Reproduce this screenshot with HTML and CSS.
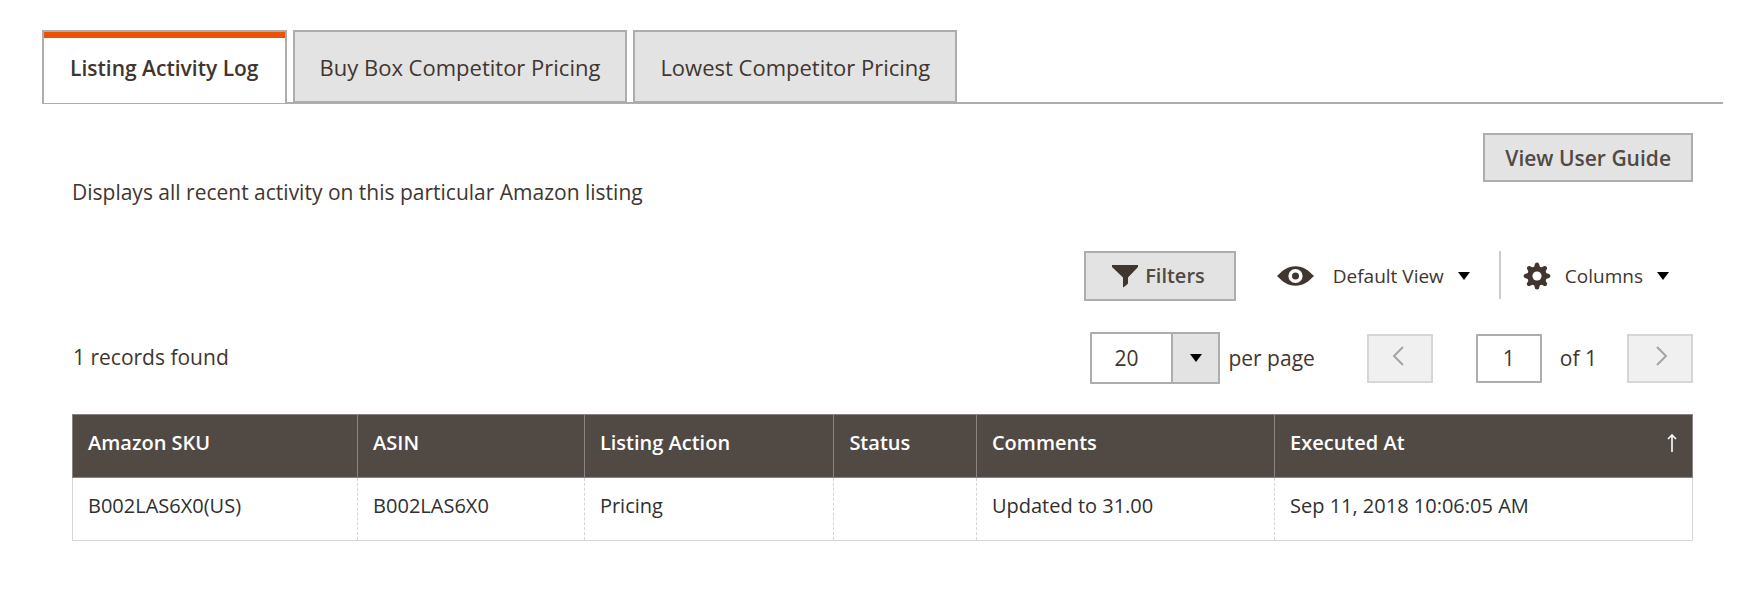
FILE: index.html
```html
<!DOCTYPE html>
<html lang="en">
<head>
<meta charset="utf-8">
<title>Listing Activity Log</title>
<link rel="stylesheet" href="styles.css">
</head>
<body>
<main class="page">
  <div class="tabs" role="tablist" aria-label="Listing details">
    <button class="tab tab-active" type="button" role="tab" aria-selected="true" aria-controls="activity">Listing Activity Log</button>
    <button class="tab" type="button" role="tab" aria-selected="false">Buy Box Competitor Pricing</button>
    <button class="tab" type="button" role="tab" aria-selected="false">Lowest Competitor Pricing</button>
  </div>

  <section class="panel" id="activity" role="tabpanel">
    <div class="intro">
      <p class="description">Displays all recent activity on this particular Amazon listing</p>
      <button class="button guide" type="button">View User Guide</button>
    </div>

    <div class="toolbar">
      <button class="button filters" type="button">
        <svg width="26" height="23" viewBox="0 0 26 23" aria-hidden="true"><path d="M0 0H26V2L16 12.5V18.5L14 20.5L11 22.5V12.5L0 2Z" fill="#41362f"/></svg>
        Filters
      </button>
      <button class="menu view" type="button">
        <svg class="eye" width="37" height="20" viewBox="0 0 38 20" aria-hidden="true"><path fill-rule="evenodd" fill="#41362f" d="M0 10C6 4 11 0 19 0S32 4 38 10C32 16 27 20 19 20S6 16 0 10ZM19 2.7A7.3 7.3 0 1 0 19 17.3 7.3 7.3 0 1 0 19 2.7Z"/><circle cx="19" cy="10" r="3.6" fill="#41362f"/></svg>
        <span>Default View</span>
        <svg width="12" height="8" viewBox="0 0 12 8" aria-hidden="true"><path d="M0 0H12L6 8Z"/></svg>
      </button>
      <button class="menu columns" type="button">
        <svg width="28" height="28" viewBox="-14 -14 28 28" aria-hidden="true">
          <g fill="#41362f">
            <path id="teeth" d="M-3.2 -8L-2 -12.2Q0 -14.6 2 -12.2L3.2 -8V8L2 12.2Q0 14.6 -2 12.2L-3.2 8Z"/>
            <use href="#teeth" transform="rotate(45)"/>
            <use href="#teeth" transform="rotate(90)"/>
            <use href="#teeth" transform="rotate(135)"/>
            <circle r="9.8"/>
          </g>
          <circle r="4.6" fill="#fff"/>
        </svg>
        <span>Columns</span>
        <svg width="12" height="8" viewBox="0 0 12 8" aria-hidden="true"><path d="M0 0H12L6 8Z"/></svg>
      </button>
    </div>

    <div class="pager">
      <p class="records">1 records found</p>
      <span class="select-box">
        <select class="size" id="size"><option>20</option><option>30</option><option>50</option><option>100</option></select>
        <span class="select-arrow"><svg width="12" height="8" viewBox="0 0 12 8" aria-hidden="true"><path d="M0 0H12L6 8Z"/></svg></span>
      </span>
      <label class="size-label" for="size">per page</label>
      <button class="step previous" type="button" aria-label="Previous page" disabled>
        <svg width="12" height="20" viewBox="0 0 12 20" aria-hidden="true"><path d="M11 1L2 10L11 19"/></svg>
      </button>
      <input class="current" id="current" type="text" value="1">
      <label class="total" for="current">of 1</label>
      <button class="step next" type="button" aria-label="Next page" disabled>
        <svg width="12" height="20" viewBox="0 0 12 20" aria-hidden="true"><path d="M1 1L10 10L1 19"/></svg>
      </button>
    </div>

    <table class="grid">
      <colgroup><col class="c-sku"><col class="c-asin"><col class="c-action"><col class="c-status"><col class="c-comments"><col class="c-date"></colgroup>
      <thead>
        <tr>
          <th scope="col">Amazon SKU</th>
          <th scope="col">ASIN</th>
          <th scope="col">Listing Action</th>
          <th scope="col">Status</th>
          <th scope="col">Comments</th>
          <th scope="col" aria-sort="ascending"><div class="sorted">Executed At
            <svg width="10" height="18" viewBox="0 0 10 18" aria-hidden="true"><path d="M5 18V2M1 5L5 1L9 5" fill="none" stroke="#fff" stroke-width="1.6"/></svg></div></th>
        </tr>
      </thead>
      <tbody>
        <tr>
          <td>B002LAS6X0(US)</td>
          <td>B002LAS6X0</td>
          <td>Pricing</td>
          <td></td>
          <td>Updated to 31.00</td>
          <td>Sep 11, 2018 10:06:05 AM</td>
        </tr>
      </tbody>
    </table>
  </section>
</main>
</body>
</html>
```
FILE: styles.css
```css
* { box-sizing: border-box; }

body {
  margin: 0;
  background: #fff;
  color: #41362f;
  font: 400 21px/30px "Open Sans", "Noto Sans", sans-serif;
}

p { margin: 0; }
svg { display: block; flex: none; }

button, input, select {
  margin: 0;
  font: inherit;
  color: inherit;
  border-radius: 0;
}

.page { padding: 30px 40px 0 42px; }

.tabs {
  display: flex;
  gap: 6px;
  border-bottom: 2px solid #adadad;
}

.tab {
  height: 72px;
  padding: 0 25px;
  border: 2px solid #adadad;
  border-bottom-width: 1px;
  background: #e3e3e3;
  font-size: 22px;
}

.tab-active {
  height: 73px;
  margin-bottom: -1px;
  padding: 0 26px;
  border-bottom: 0;
  background: #fff;
  box-shadow: inset 0 6px #eb5202;
  font-size: 21px;
  font-weight: 600;
}

.panel { padding: 29px 30px 0; }

.intro {
  display: flex;
  justify-content: space-between;
}

.description { padding-top: 44px; }

.button {
  border: 2px solid #adadad;
  background: #e3e3e3;
  color: #514943;
  font-weight: 600;
}

.guide {
  align-self: flex-start;
  height: 49px;
  padding: 0 20px;
}

.toolbar {
  display: flex;
  justify-content: flex-end;
  margin-top: 44px;
  font-size: 19px;
}

.filters {
  display: flex;
  align-items: center;
  gap: 7px;
  height: 50px;
  padding: 0 29px 0 26px;
  font-size: 20px;
}

.menu {
  display: flex;
  align-items: center;
  gap: 14px;
  height: 48px;
  border: 0;
  background: none;
}

.view { padding: 2px 29px 0 41px; }
.eye { margin-right: 5px; }

.columns {
  padding: 2px 24px 0 22px;
  border-left: 2px solid #ccc;
}

.pager {
  display: flex;
  align-items: center;
  margin-top: 31px;
}

.records { margin-right: auto; padding: 0 0 2px 1px; }

.select-box {
  display: grid;
  width: 130px;
}

.size, .select-arrow { grid-area: 1 / 1; }

.size {
  appearance: none;
  height: 52px;
  padding: 0 22px;
  border: 2px solid #adadad;
  border-radius: 1px;
  background: #fff;
}

.select-arrow {
  display: flex;
  align-items: center;
  justify-content: center;
  justify-self: end;
  width: 49px;
  border: 2px solid #adadad;
  background: #e3e3e3;
  pointer-events: none;
}

.size-label { margin-left: 8px; }

.step {
  display: flex;
  align-items: center;
  justify-content: center;
  width: 66px;
  height: 49px;
  padding: 0 0 4px;
  border: 2px solid #d6d6d6;
  background: #f0f0f0;
}

.step path { fill: none; stroke: #a6a3a0; stroke-width: 2; }
.previous { margin-left: 52px; padding-right: 4px; }
.next { padding-left: 4px; }

.current {
  width: 66px;
  height: 49px;
  margin-left: 43px;
  padding: 0;
  border: 2px solid #adadad;
  border-radius: 1px;
  text-align: center;
}

.total { margin: 0 30px 0 18px; }

.grid {
  width: 100%;
  margin-top: 30px;
  border-collapse: collapse;
  table-layout: fixed;
  font-size: 20px;
}

.c-sku { width: 17.6%; }
.c-asin { width: 14%; }
.c-action { width: 15.4%; }
.c-status { width: 8.8%; }
.c-comments { width: 18.4%; }

.grid th, .grid td {
  padding: 13px 15px 19px;
  text-align: left;
}

.grid th {
  border: 1px solid #8a837f;
  background: #514943;
  color: #fff;
  font-weight: 600;
}

.grid td {
  border: 1px dashed #d6d6d6;
  border-bottom-style: solid;
  color: #303030;
}

.grid td:first-child { border-left-style: solid; }
.grid td:last-child { border-right-style: solid; }

.sorted {
  display: flex;
  align-items: center;
  justify-content: space-between;
}
```
